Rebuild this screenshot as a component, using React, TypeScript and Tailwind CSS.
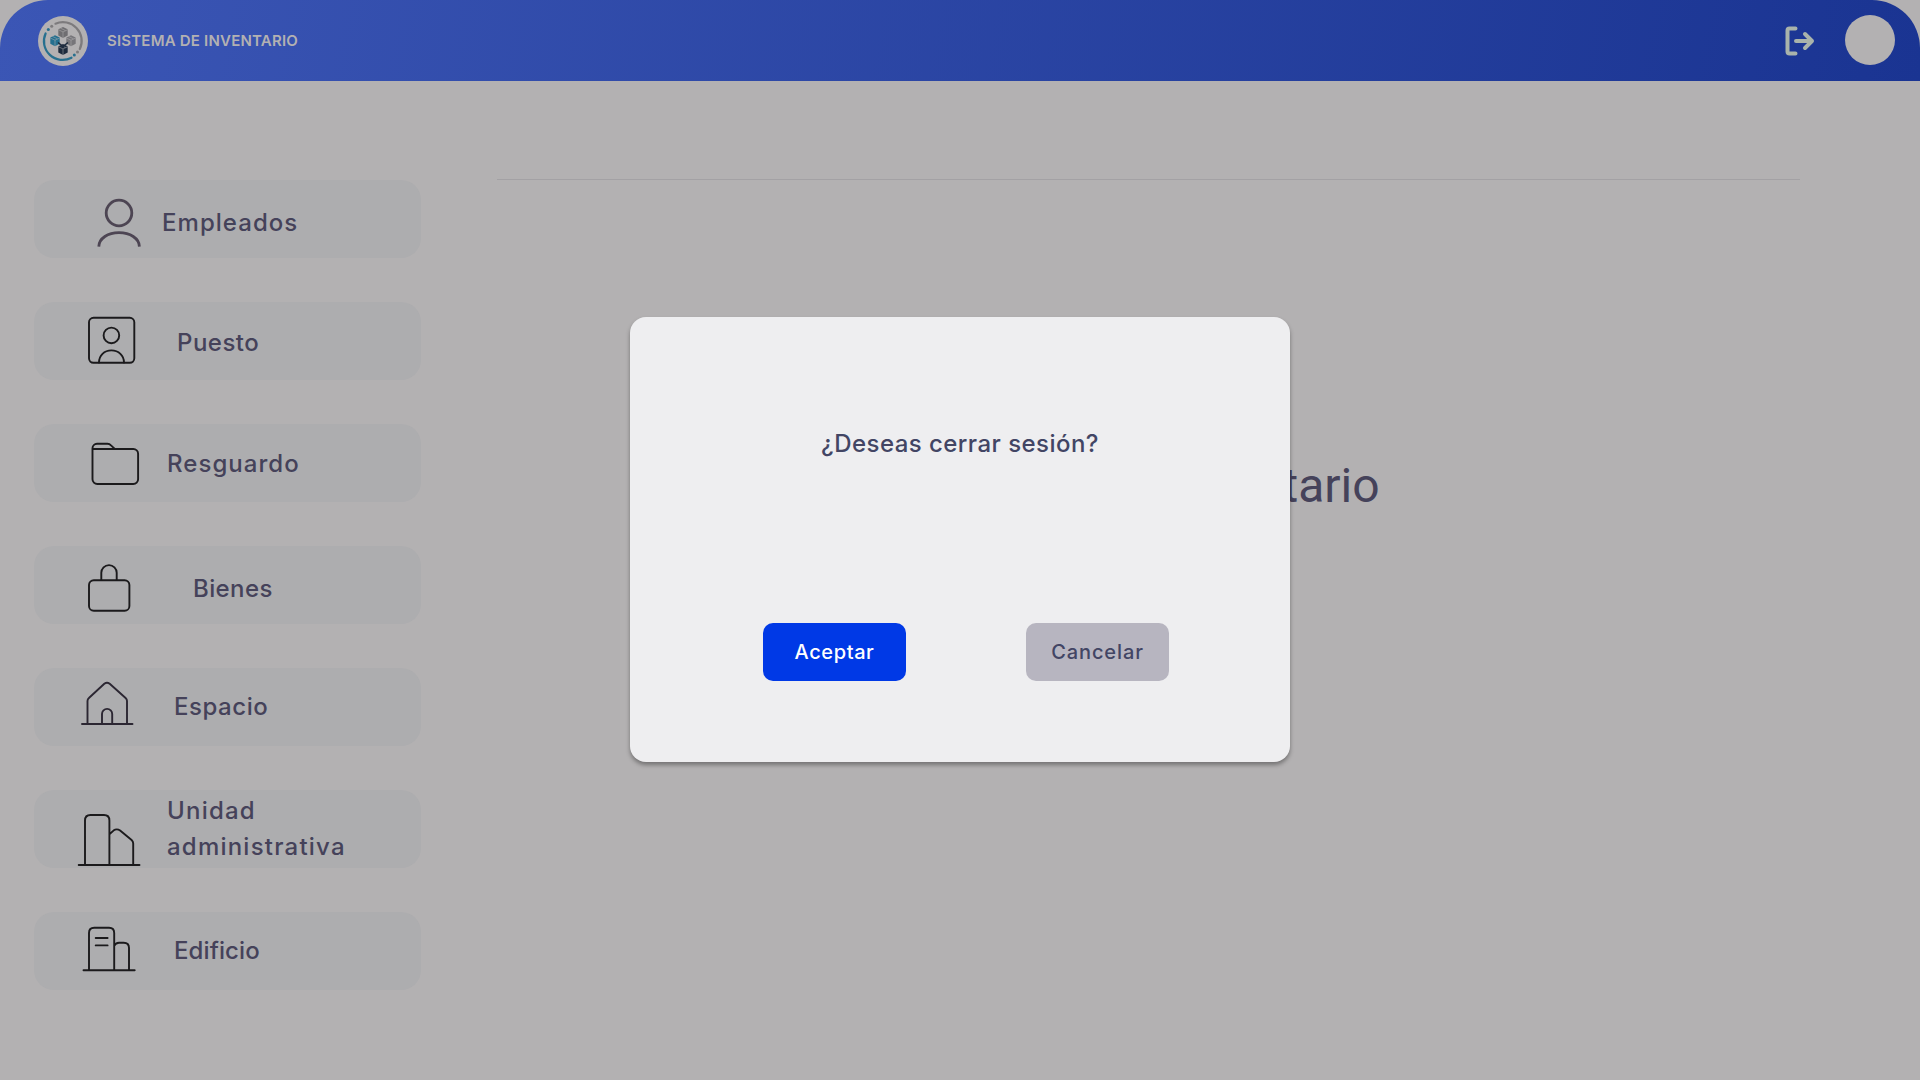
import type { ReactNode } from "react";

type MenuItem = { label: ReactNode; text: string; icon: ReactNode; stroke: string; strokeWidth: number };

const INK = "#1b1a1c";

const items: MenuItem[] = [
  {
    label: "Empleados",
    text: "ml-[16px] mt-[25px] tracking-[1.05px]",
    stroke: "#4d4553",
    strokeWidth: 2.8,
    icon: (
      <>
        <circle cx="85" cy="33" r="12.8" />
        <path d="M64.8 66.6C65 58.2 74 52.7 85 52.7S105.2 58.2 105.4 66.6" strokeLinecap="butt" />
      </>
    ),
  },
  {
    label: "Puesto",
    text: "ml-[31px] mt-[23px] tracking-[0.5px]",
    stroke: INK,
    strokeWidth: 1.9,
    icon: (
      <>
        <rect x="55" y="15.8" width="45.3" height="45" rx="4.5" />
        <circle cx="77.4" cy="33.4" r="7.8" />
        <path d="M65 60.5C65 53.5 70.2 48.4 77.4 48.4S90 53.5 90 60.5" />
      </>
    ),
  },
  {
    label: "Resguardo",
    text: "ml-[21px] mt-[22px] tracking-[1.05px]",
    stroke: INK,
    strokeWidth: 1.9,
    icon: (
      <path d="M58.5 25H99.3a4.8 4.8 0 0 1 4.8 4.8V55.2a4.8 4.8 0 0 1-4.8 4.8H63.3a4.8 4.8 0 0 1-4.8-4.8V24.3a4.5 4.5 0 0 1 4.5-4.5H73.5q2 0 3.5 1.6L80.5 24.6" />
    ),
  },
  {
    label: "Bienes",
    text: "ml-[47px] mt-[25px] tracking-[0.4px]",
    stroke: INK,
    strokeWidth: 1.9,
    icon: (
      <>
        <rect x="55" y="34.2" width="40.4" height="30.6" rx="4.8" />
        <path d="M67.3 34V26.8a7.7 7.7 0 0 1 15.4 0V34" />
      </>
    ),
  },
  {
    label: "Espacio",
    text: "ml-[28px] mt-[21px] tracking-[0.55px]",
    stroke: "#2b2632",
    strokeWidth: 1.9,
    icon: (
      <path d="M48 56H98.5M53.5 56V33q0-1.8 1.4-3L70.3 15.8q2.7-2 5.4 0L91.6 30q1.4 1.2 1.4 3V56M68 56V46a5.1 5.1 0 0 1 10.2 0V56" />
    ),
  },
  {
    label: (
      <>
        Unidad
        <br />
        administrativa
      </>
    ),
    text: "ml-[21px] mt-[3px] tracking-[1.22px]",
    stroke: INK,
    strokeWidth: 1.9,
    icon: (
      <path d="M44.7 75H105.5M51 75V30.5Q51 25 56.5 25H70Q75.4 25 75.4 30.5V75M75.4 44.3L79.5 40.6q3.3-2.4 6.6 0L97.6 50q1.6 1.4 1.6 3.5V75" />
    ),
  },
  {
    label: "Edificio",
    text: "ml-[28px] mt-[21px] tracking-[0.1px]",
    stroke: INK,
    strokeWidth: 1.9,
    icon: (
      <path d="M49.5 58.3H100.7M55 58V21Q55 15.8 60.2 15.8H75Q80.2 15.8 80.2 21V58M61.7 26H73.6M61.7 33.4H73.6M80.2 34Q81.5 30.8 85 30.8H89.7Q95 30.8 95 36V58" />
    ),
  },
];

function Cube({ x, y, fill }: { x: number; y: number; fill: string }) {
  return (
    <g transform={`translate(${x} ${y})`}>
      <path d="M0-5.5L4.7-3.3V3L0 5.5L-4.7 3V-3.3Z" fill={fill} />
      <path d="M-4.7-2.8L0-.6L4.7-2.8M0-.6V5.5M-2.4-4.3L2.4-2" fill="none" stroke="#b3b1b2" strokeWidth="0.5" />
    </g>
  );
}

function Logo() {
  return (
    <svg className="ml-[38px] h-[50px] w-[50px] shrink-0" viewBox="0 0 50 50" fill="none">
      <circle cx="25" cy="25" r="25" fill="#b3b1b2" />
      <path d="M17.5 7.7A18.7 18.7 0 0 1 41.8 33" stroke="#7d7b7d" strokeWidth="2.2" strokeLinecap="round" />
      <path d="M7.6 17.5A18.7 18.7 0 0 0 33.5 41.7" stroke="#27708f" strokeWidth="2.2" strokeLinecap="round" />
      <circle cx="13.7" cy="10.3" r="1.5" fill="#7d7b7d" />
      <circle cx="10.3" cy="13.6" r="1.5" fill="#27708f" />
      <circle cx="39.5" cy="36" r="1.5" fill="#7d7b7d" />
      <circle cx="36.3" cy="39" r="1.5" fill="#27708f" />
      <Cube x={25} y={16.5} fill="#6f6e71" />
      <Cube x={17} y={24.8} fill="#246f8f" />
      <Cube x={33} y={24.8} fill="#77767a" />
      <Cube x={25} y={33.5} fill="#1d2b3d" />
      <path d="M20 26.5L25 30.5L30 26.5" stroke="#1d2b3d" strokeWidth="1.6" />
    </svg>
  );
}

export default function App() {
  return (
    <div className="relative h-[1080px] w-[1920px] overflow-hidden bg-[#b3b1b2] font-['Inter',sans-serif]">
      <header className="flex h-[81px] items-center rounded-t-[48px] bg-[linear-gradient(100deg,#3b56b5,#1a3492)]">
        <Logo />
        <span className="mt-[2px] ml-[19px] text-[15px] font-semibold tracking-[0.2px] whitespace-nowrap text-[#b3b1b2]">SISTEMA DE INVENTARIO</span>
        <svg className="ml-auto h-[30px] w-[30px]" viewBox="0 0 30 30" fill="none" stroke="#a9b3ab" strokeWidth="4" strokeLinecap="round" strokeLinejoin="round">
          <path d="M10.5 2.5H4.5Q2.5 2.5 2.5 4.5V25.5Q2.5 27.5 4.5 27.5H10.5M11 15H27M20 8L27 15L20 22" />
        </svg>
        <div className="mr-[25px] mb-px ml-[30px] h-[50px] w-[50px] rounded-full bg-[#b3b1b2]" />
      </header>

      <div className="flex">
        <nav className="ml-[34px] flex w-[387px] flex-col gap-[44px] pt-[99px]">
          {items.map((item, i) => (
            <a key={i} className="flex h-[78px] items-start rounded-[20px] bg-[#adadaf]">
              <svg className="h-[78px] w-[112px] shrink-0" viewBox="0 0 112 78" fill="none" stroke={item.stroke} strokeWidth={item.strokeWidth} strokeLinecap="round" strokeLinejoin="round">
                {item.icon}
              </svg>
              <span className={`${item.text} text-2xl leading-[36px] font-medium whitespace-nowrap text-[#45425a]`}>{item.label}</span>
            </a>
          ))}
        </nav>
        <main className="ml-[76px] w-[1303px] pt-[98px]">
          <div className="border-t border-[#a3a1a4] pt-[278px] text-center">
            <h1 className="font-['Roboto',sans-serif] text-5xl leading-[56px] text-[#45425a]">Sistema de Inventario</h1>
          </div>
        </main>
      </div>

      <div role="dialog" className="absolute top-[317px] left-[630px] flex h-[445px] w-[660px] flex-col items-center rounded-2xl bg-[#eeeef0] pt-[109px] shadow-[0_3px_4px_rgba(0,0,0,0.35)]">
        <p className="text-2xl leading-[36px] font-medium tracking-[0.45px] whitespace-nowrap text-[#424564]">¿Deseas cerrar sesión?</p>
        <div className="mt-[161px] ml-[12px] flex gap-[120px]">
          <button className="h-[58px] w-[143px] rounded-[10px] bg-[#0039e6] text-xl font-medium tracking-[0.6px] text-white">Aceptar</button>
          <button className="h-[58px] w-[143px] rounded-[10px] bg-[#b7b5c0] text-xl font-medium tracking-[0.9px] text-[#424564]">Cancelar</button>
        </div>
      </div>
    </div>
  );
}
